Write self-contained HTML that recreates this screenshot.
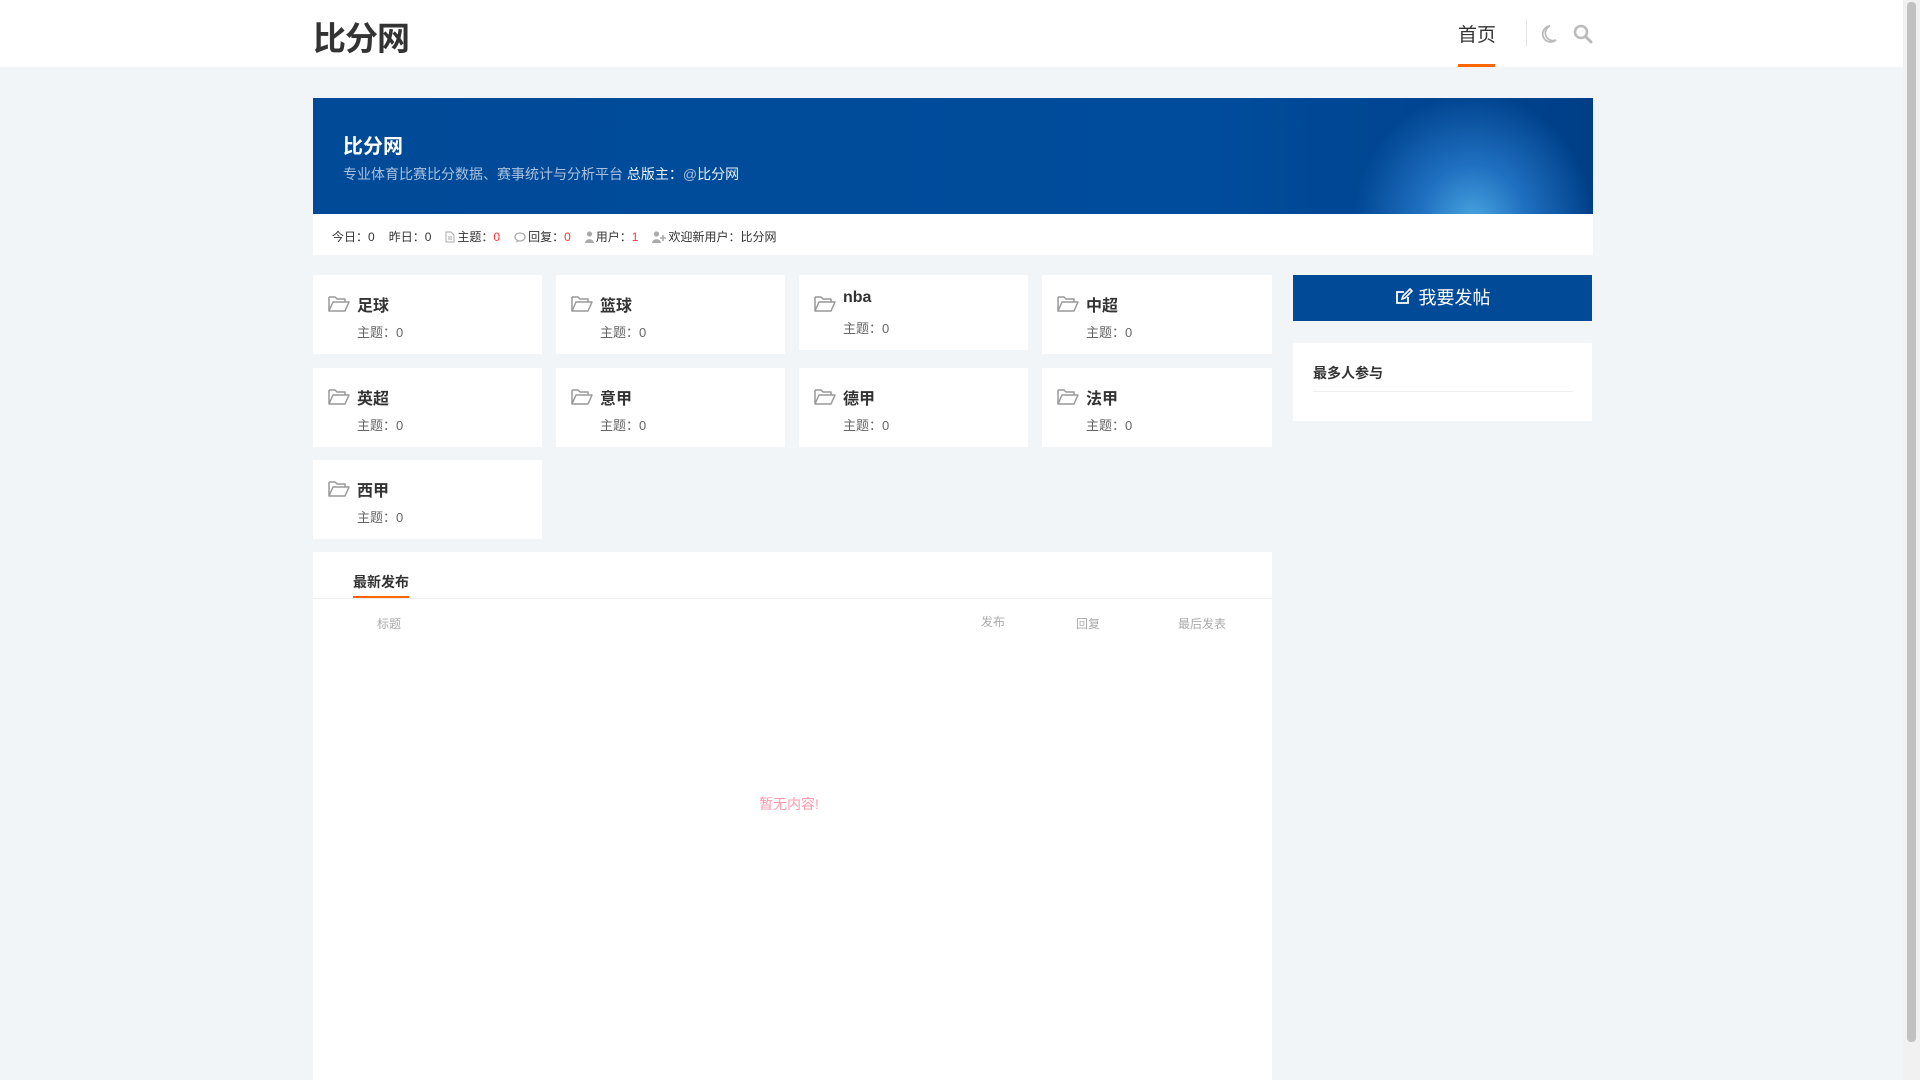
<!DOCTYPE html>
<html><head><meta charset="utf-8"><style>
*{margin:0;padding:0;box-sizing:border-box}
body{width:1920px;height:1080px;overflow:hidden;background:#f2f5f8;font-family:"Liberation Sans","Noto Sans CJK SC",sans-serif;color:#333;position:relative}
.sb{position:absolute;right:0;top:0;width:17px;height:1080px;background:#f1f1f1}
.sb i{position:absolute;left:4px;top:2px;width:9px;height:1040px;background:#c1c1c1;border-radius:4px}
header{position:absolute;left:0;top:0;width:1903px;height:67px;background:#fff}
.logo{position:absolute;left:313px;top:12px;font-size:33px;font-weight:bold;color:#333;letter-spacing:-1px}
.nav{position:absolute;left:1458px;top:20px;font-size:19px;color:#333}
.nav:after{content:"";position:absolute;left:0;top:44px;width:37px;height:3px;background:#ff6600}
.div{position:absolute;left:1526px;top:20px;width:1px;height:26px;background:#e5e5e5}
.ico{position:absolute;top:24px}
.banner{position:absolute;left:313px;top:98px;width:1280px;height:116px;background:radial-gradient(ellipse 120px 130px at 1160px 125px,#4aa7e0 0%,#1f6fc0 45%,rgba(0,74,152,0) 100%),linear-gradient(90deg,#004a98,#004c9c 70%,#003f88);overflow:hidden}
.banner h2{position:absolute;left:30px;top:32px;color:#fff;font-size:20px}
.banner p{position:absolute;left:30px;top:66px;color:#a9c0de;font-size:14px}
.banner p b{font-weight:normal;color:#e8f0fa}
.stats{position:absolute;left:313px;top:214px;width:1280px;height:41px;background:#fff;font-size:12px;color:#333;padding:14px 0 0 19px;white-space:nowrap}
.stats span{margin-right:14px}.r{color:#f33}
.stats svg{vertical-align:-2px;margin-right:2px}
.card{position:absolute;width:229px;height:79px;background:#fff}
.card svg{position:absolute;left:15px;top:20px}
.card b{position:absolute;left:44px;top:17px;font-size:16px;color:#333}
.card s{text-decoration:none;position:absolute;left:44px;top:47px;font-size:13px;color:#666}
.btn{position:absolute;left:1293px;top:275px;width:299px;height:46px;background:#004a98;color:#fff;font-size:18px;text-align:center;line-height:46px}
.box{position:absolute;left:1293px;top:343px;width:299px;height:78px;background:#fff}
.box h4{position:absolute;left:20px;top:20px;font-size:14px;color:#333}
.box i{position:absolute;left:20px;top:48px;width:260px;height:1px;background:#eee}
.latest{position:absolute;left:313px;top:552px;width:959px;height:528px;background:#fff}
.tab{position:absolute;left:40px;top:20px;font-size:14px;font-weight:bold;color:#333}
.tab:after{content:"";position:absolute;left:0;top:24px;width:56px;height:3px;background:#ff6600}
.hl{position:absolute;left:0;top:46px;width:959px;height:1px;background:#eee}
.th{position:absolute;top:63px;font-size:12px;color:#aaa}
.empty{position:absolute;left:0;width:952px;top:242px;text-align:center;color:#f9a;font-size:14px}
</style></head><body>
<header>
<div class="logo">比分网</div>
<div class="nav">首页</div>
<div class="div"></div>
<svg class="ico" style="left:1540px" width="18" height="20" viewBox="0 0 18 20"><path d="M10 2A8 8 0 1 0 16 16 7 7 0 0 1 10 2Z" fill="none" stroke="#bbb" stroke-width="1.8"/></svg>
<svg class="ico" style="left:1573px" width="20" height="20" viewBox="0 0 20 20"><circle cx="8" cy="8" r="6" fill="none" stroke="#bbb" stroke-width="2.6"/><path d="M12.5 12.5L18 18" stroke="#bbb" stroke-width="3" stroke-linecap="round"/></svg>
</header>
<div class="banner"><h2>比分网</h2><p>专业体育比赛比分数据、赛事统计与分析平台 <b>总版主：</b>@<b>比分网</b></p></div>
<div class="stats"><span>今日：0</span><span>昨日：0</span><span><svg width="10" height="12" viewBox="0 0 10 12"><path d="M1 1h5l3 3v7H1z M3 6h4M3 8h4" fill="none" stroke="#aaa"/></svg>主题：<em class="r" style="font-style:normal">0</em></span><span><svg width="12" height="11" viewBox="0 0 12 11"><ellipse cx="6" cy="5" rx="5" ry="4" fill="none" stroke="#aaa" stroke-width="1.3"/><path d="M3 8l-1 3 3-2" fill="#aaa"/></svg>回复：<em class="r" style="font-style:normal">0</em></span><span><svg width="9" height="12" viewBox="0 0 9 12"><circle cx="4.5" cy="3" r="2.6" fill="#aaa"/><path d="M0 12c0-5 9-5 9 0z" fill="#aaa"/></svg>用户：<em class="r" style="font-style:normal">1</em></span><span><svg width="14" height="12" viewBox="0 0 14 12"><circle cx="4.5" cy="3" r="2.6" fill="#aaa"/><path d="M0 12c0-5 9-5 9 0z" fill="#aaa"/><path d="M11 4v6M8 7h6" stroke="#aaa" stroke-width="1.6"/></svg>欢迎新用户：比分网</span></div>

<div class="card" style="left:313px;top:275px"><svg width="22" height="18" viewBox="0 0 22 18"><path d="M1 2h6l2 2h8v3M1 2v14h16l4-9H5L1 16" fill="none" stroke="#999" stroke-width="1.5" stroke-linejoin="round"/></svg><b>足球</b><s>主题：0</s></div>
<div class="card" style="left:556px;top:275px"><svg width="22" height="18" viewBox="0 0 22 18"><path d="M1 2h6l2 2h8v3M1 2v14h16l4-9H5L1 16" fill="none" stroke="#999" stroke-width="1.5" stroke-linejoin="round"/></svg><b>篮球</b><s>主题：0</s></div>
<div class="card" style="left:799px;top:275px;height:75px"><svg width="22" height="18" viewBox="0 0 22 18"><path d="M1 2h6l2 2h8v3M1 2v14h16l4-9H5L1 16" fill="none" stroke="#999" stroke-width="1.5" stroke-linejoin="round"/></svg><b style="top:14px">nba</b><s style="top:43px">主题：0</s></div>
<div class="card" style="left:1042px;top:275px;width:230px"><svg width="22" height="18" viewBox="0 0 22 18"><path d="M1 2h6l2 2h8v3M1 2v14h16l4-9H5L1 16" fill="none" stroke="#999" stroke-width="1.5" stroke-linejoin="round"/></svg><b>中超</b><s>主题：0</s></div>
<div class="card" style="left:313px;top:368px"><svg width="22" height="18" viewBox="0 0 22 18"><path d="M1 2h6l2 2h8v3M1 2v14h16l4-9H5L1 16" fill="none" stroke="#999" stroke-width="1.5" stroke-linejoin="round"/></svg><b>英超</b><s>主题：0</s></div>
<div class="card" style="left:556px;top:368px"><svg width="22" height="18" viewBox="0 0 22 18"><path d="M1 2h6l2 2h8v3M1 2v14h16l4-9H5L1 16" fill="none" stroke="#999" stroke-width="1.5" stroke-linejoin="round"/></svg><b>意甲</b><s>主题：0</s></div>
<div class="card" style="left:799px;top:368px"><svg width="22" height="18" viewBox="0 0 22 18"><path d="M1 2h6l2 2h8v3M1 2v14h16l4-9H5L1 16" fill="none" stroke="#999" stroke-width="1.5" stroke-linejoin="round"/></svg><b>德甲</b><s>主题：0</s></div>
<div class="card" style="left:1042px;top:368px;width:230px"><svg width="22" height="18" viewBox="0 0 22 18"><path d="M1 2h6l2 2h8v3M1 2v14h16l4-9H5L1 16" fill="none" stroke="#999" stroke-width="1.5" stroke-linejoin="round"/></svg><b>法甲</b><s>主题：0</s></div>
<div class="card" style="left:313px;top:460px"><svg width="22" height="18" viewBox="0 0 22 18"><path d="M1 2h6l2 2h8v3M1 2v14h16l4-9H5L1 16" fill="none" stroke="#999" stroke-width="1.5" stroke-linejoin="round"/></svg><b>西甲</b><s>主题：0</s></div>

<div class="btn"><svg width="18" height="18" viewBox="0 0 18 18" style="vertical-align:-2px;margin-right:6px"><path d="M13 9v6H2V4h7" fill="none" stroke="#fff" stroke-width="1.8"/><path d="M7 11l1-3 7-7 2 2-7 7z" fill="none" stroke="#fff" stroke-width="1.6"/></svg>我要发帖</div>
<div class="box"><h4>最多人参与</h4><i></i></div>

<div class="latest"><div class="tab">最新发布</div><div class="hl"></div>
<div class="th" style="left:64px">标题</div><div class="th" style="left:668px;top:61px">发布</div><div class="th" style="left:763px">回复</div><div class="th" style="left:865px">最后发表</div>
<div class="empty">暂无内容!</div></div>
<div class="sb"><i></i></div>
</body></html>
